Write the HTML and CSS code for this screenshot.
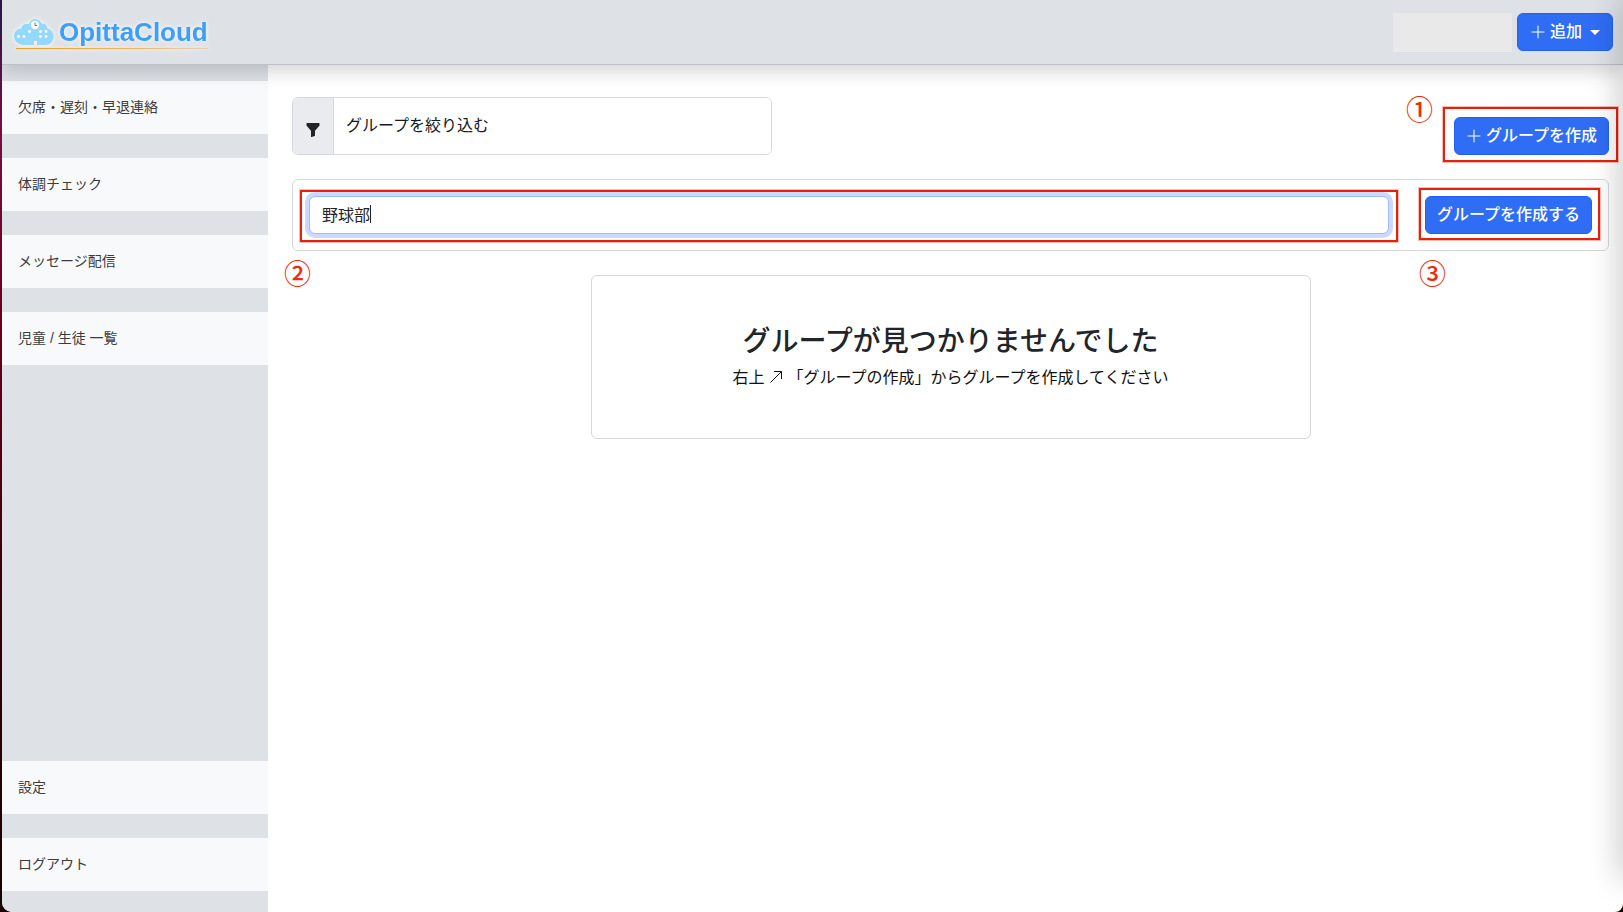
FILE: index.html
```
<!DOCTYPE html>
<html lang="ja">
<head>
<meta charset="utf-8">
<title>OpittaCloud</title>
<link rel="stylesheet" href="styles.css">
</head>
<body>
<div class="app">
  <header class="header">
    <a class="brand" href="#">
      <svg class="brand-icon" width="40" height="27" viewBox="0 0 40 27" aria-hidden="true">
        <path fill="#94d8fb" d="M9 26a9 9 0 0 1-9-8.500C0 13 3 10 7 9.500 8 6 11 4 15 5 16 2 18 0 21 0s5.500 2 6.500 4.500C31 4 33 6 33.500 9.500 37 10.500 39.500 13.500 39.500 17.500 39.500 22.500 36 26 31 26h-8v-4h-3v4z"/>
        <circle cx="21" cy="6" r="4.200" fill="#fff"/>
        <path d="M21 3.500V6.500H23" fill="none" stroke="#777" stroke-width="1"/>
        <g fill="#fff"><circle cx="4.500" cy="17.500" r="1.400"/><circle cx="10" cy="17.500" r="1.400"/><circle cx="15.500" cy="12.500" r="1.400"/><circle cx="26.500" cy="12.500" r="1.400"/><circle cx="32" cy="12.500" r="1.400"/><circle cx="26.500" cy="17.500" r="1.400"/><circle cx="32" cy="17.500" r="1.400"/></g>
      </svg>
      <span class="brand-name">OpittaCloud</span>
    </a>
    <div class="account"></div>
    <button class="btn" type="button">
      <svg width="16" height="16" viewBox="0 0 16 16" aria-hidden="true"><path d="M8 2v12M2 8h12" stroke="currentColor" stroke-linecap="round"/></svg>
      <span>追加</span>
      <span class="caret"></span>
    </button>
  </header>
  <div class="body">
    <nav class="sidebar">
      <a class="nav-item" href="#">欠席・遅刻・早退連絡</a>
      <a class="nav-item" href="#">体調チェック</a>
      <a class="nav-item" href="#">メッセージ配信</a>
      <a class="nav-item" href="#">児童 / 生徒 一覧</a>
      <div class="nav-space"></div>
      <a class="nav-item" href="#">設定</a>
      <a class="nav-item" href="#">ログアウト</a>
    </nav>
    <main class="main">
      <div class="toolbar">
        <div class="filter">
          <label class="filter-icon" for="filter" aria-label="グループを絞り込む">
            <svg width="16" height="16" viewBox="0 0 16 16" aria-hidden="true"><path fill="currentColor" d="M1.500 1.500A.5.500 0 0 1 2 1h12a.5.500 0 0 1 .5.500v2a.5.500 0 0 1-.13.340L10 8.700V13.500a.5.500 0 0 1-.34.470l-3 1A.5.500 0 0 1 6 14.500V8.700L1.630 3.840A.5.500 0 0 1 1.500 3.500z"/></svg>
          </label>
          <input class="filter-input" id="filter" type="text" placeholder="グループを絞り込む">
        </div>
        <div class="callout callout-create">
          <button class="btn btn-main" type="button">
            <svg width="16" height="16" viewBox="0 0 16 16" aria-hidden="true"><path d="M8 2v12M2 8h12" stroke="currentColor" stroke-linecap="round"/></svg>
            <span>グループを作成</span>
          </button>
          <span class="step step-one">①</span>
        </div>
      </div>
      <form class="create-row">
        <div class="callout callout-name">
          <input class="name-input" type="text" aria-label="グループ名" value="野球部">
          <span class="text-cursor" aria-hidden="true"><span class="typed">野球部</span></span>
          <span class="step step-two">②</span>
        </div>
        <div class="callout callout-submit">
          <button class="btn btn-main" type="button">グループを作成する</button>
          <span class="step step-three">③</span>
        </div>
      </form>
      <section class="empty">
        <h1 class="empty-title">グループが見つかりませんでした</h1>
        <p class="empty-text">右上
          <svg class="arrow" width="14" height="16" viewBox="0 0 14 16" aria-hidden="true"><path d="M1.500 13.500L12.500 2.500M5 2.500h7.500V10" fill="none" stroke="currentColor" stroke-width="1"/></svg>
          「グループの作成」からグループを作成してください</p>
      </section>
    </main>
  </div>
  <div class="edge-shadow"></div>
</div>
</body>
</html>
```
FILE: styles.css
```
* { box-sizing: border-box; }

html { height: 100%; }

body {
  margin: 0;
  min-height: 100%;
  display: flex;
  background: linear-gradient(#25164d, #74103f 14%, #65001f 35%, #300008 70%, #180003);
  color: #212529;
  font: 16px/24px "Liberation Sans", "Noto Sans CJK JP", sans-serif;
}

.app {
  position: relative;
  flex: 1;
  display: flex;
  flex-direction: column;
  min-height: 100vh;
  margin-left: 2px;
  overflow: hidden;
  background: #fff;
  border-radius: 0 0 8px 10px;
}

.header {
  position: relative;
  z-index: 1;
  display: flex;
  align-items: center;
  gap: 5px;
  height: 65px;
  padding: 0 10px 0 12px;
  background: #dee2e6;
  border-bottom: 1px solid #bfc1c8;
  box-shadow: 0 8px 16px rgba(0, 0, 0, .15);
}

.brand {
  position: relative;
  display: flex;
  align-items: center;
  gap: 5px;
  margin-right: auto;
  color: #3d9ffa;
  text-decoration: none;
  filter: drop-shadow(0 0 2px #fff);
}

.brand::after {
  content: "";
  position: absolute;
  left: 2px;
  right: 0;
  bottom: -2px;
  height: 1px;
  background: linear-gradient(90deg, #f59f1a, #f3b458 60%, #e3d0b8);
}

.brand-name {
  font-size: 26px;
  font-weight: 700;
  line-height: 30px;
}

.account {
  width: 119px;
  height: 39px;
  background: #e9e9e9;
}

.btn {
  display: flex;
  align-items: center;
  justify-content: center;
  gap: 4px;
  height: 38px;
  padding: 0 12px;
  border: 1px solid #1f62f5;
  border-radius: 6px;
  background: #306df5;
  color: #fff;
  font: inherit;
  font-weight: 500;
  white-space: nowrap;
}

.btn-main { padding: 0 11px; }

.caret {
  margin-left: 4px;
  border: 5px solid transparent;
  border-top-color: currentColor;
  border-bottom: 0;
}

.body { flex: 1; display: flex; }

.sidebar {
  flex: none;
  width: 266px;
  display: flex;
  flex-direction: column;
  gap: 24px;
  padding: 16px 0 21px;
  background: #dee2e6;
}

.nav-item {
  padding: 16px;
  background: #f8f9fb;
  color: #3c3c3c;
  font-size: 14px;
  line-height: 21px;
  text-decoration: none;
}

.nav-space { flex: 1; }

.main {
  flex: 1;
  min-width: 0;
  padding: 32px 14px 24px 24px;
}

.toolbar {
  display: flex;
  justify-content: space-between;
  align-items: flex-end;
}

.filter {
  display: flex;
  width: 480px;
  height: 58px;
  border: 1px solid #d5d9dd;
  border-radius: 6px;
  overflow: hidden;
}

.filter-icon {
  display: flex;
  align-items: center;
  padding: 8px 12px 0;
  background: #e9ebef;
  border-right: 1px solid #d5d9dd;
}

.filter-input {
  flex: 1;
  min-width: 0;
  padding: 0 12px;
  border: 0;
  color: #212529;
  font: inherit;
}

.filter-input::placeholder { color: #17191c; opacity: 1; }

.create-row {
  display: flex;
  gap: 36px;
  margin-top: 24px;
  padding: 16px;
  border: 1px solid #d5d7da;
  border-radius: 6px;
}

.callout { position: relative; }
.callout-name { flex: 1; }

.callout::after {
  content: "";
  position: absolute;
  border: 2px solid #e5200c;
  box-shadow: 0 0 0 1px rgba(229, 32, 12, .3);
  pointer-events: none;
}

.callout-create::after { inset: -10px -9px -7px -11px; }
.callout-name::after { inset: -6px -9px -8px -9px; }
.callout-submit::after { inset: -8px -8px -6px -6px; }

.step {
  position: absolute;
  color: #ee2c0c;
  font: 500 27px/27px "Noto Sans CJK JP", sans-serif;
}

.step-one { left: -48px; top: -22px; }
.step-two { left: -25px; top: 63px; }
.step-three { left: -6px; top: 63px; }

.name-input {
  display: block;
  width: 100%;
  height: 38px;
  padding: 0 12px 2px;
  border: 1px solid #9cbcfa;
  border-radius: 6px;
  box-shadow: 0 0 0 4px #cbdafc;
  color: #212529;
  font: inherit;
  outline: 0;
}

.text-cursor {
  position: absolute;
  left: 13px;
  top: 9px;
  height: 18px;
  border-right: 1px solid #222;
  pointer-events: none;
}

.typed { visibility: hidden; }

.empty {
  max-width: 720px;
  margin: 24px auto 0;
  padding: 48px 16px;
  border: 1px solid #d5d7da;
  border-radius: 6px;
  text-align: center;
}

.empty-title {
  margin: 0 0 6px;
  font-size: 28px;
  line-height: 36px;
  font-weight: 500;
}

.empty-text { margin: 0; color: #111; }

.arrow { vertical-align: -2px; }

.edge-shadow {
  position: absolute;
  z-index: 2;
  left: 100%;
  top: 0;
  bottom: 36px;
  width: 20px;
  box-shadow: 0 0 32px 2px rgba(0, 0, 0, .25);
  pointer-events: none;
}
```
